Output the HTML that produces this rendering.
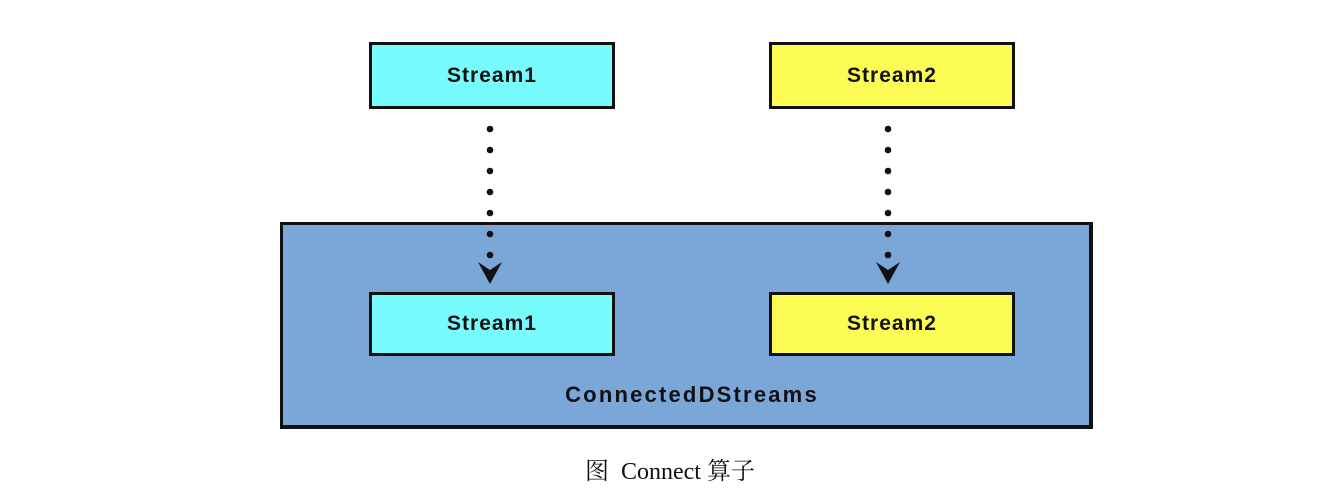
<!DOCTYPE html>
<html><head><meta charset="utf-8"><style>
body{margin:0;width:1328px;height:500px;background:#fff;position:relative;overflow:hidden;font-family:"Liberation Sans",sans-serif}
.b{position:absolute;box-sizing:border-box;border:3px solid #111;display:flex;align-items:center;justify-content:center;font-weight:bold;font-size:21px;color:#111;letter-spacing:1px}
.c{background:#77fbfd}.y{background:#fdfc55}
</style></head><body>
<div class="b" style="left:280px;top:222px;width:813px;height:207px;background:#7aa6d8;border-width:3px 4px 4px 3px;align-items:flex-end;padding-bottom:17px;font-size:22px;letter-spacing:2.2px;padding-left:12px">ConnectedDStreams</div>
<div class="b c" style="left:369px;top:42px;width:246px;height:67px">Stream1</div>
<div class="b y" style="left:769px;top:42px;width:246px;height:67px">Stream2</div>
<div class="b c" style="left:369px;top:292px;width:246px;height:64px">Stream1</div>
<div class="b y" style="left:769px;top:292px;width:246px;height:64px">Stream2</div>
<svg width="1328" height="500" style="position:absolute;left:0;top:0">
<g fill="#111">
<circle cx="490" cy="129" r="3.3"/><circle cx="490" cy="150" r="3.3"/><circle cx="490" cy="171" r="3.3"/><circle cx="490" cy="192" r="3.3"/><circle cx="490" cy="213" r="3.3"/><circle cx="490" cy="234" r="3.3"/><circle cx="490" cy="255" r="3.3"/>
<path d="M478 262 L490 270 L502 262 L490 284 Z"/>
<circle cx="888" cy="129" r="3.3"/><circle cx="888" cy="150" r="3.3"/><circle cx="888" cy="171" r="3.3"/><circle cx="888" cy="192" r="3.3"/><circle cx="888" cy="213" r="3.3"/><circle cx="888" cy="234" r="3.3"/><circle cx="888" cy="255" r="3.3"/>
<path d="M876 262 L888 270 L900 262 L888 284 Z"/>
</g></svg>
<div style="position:absolute;left:585px;top:451px;font-family:'Liberation Serif','Noto Serif CJK SC',serif;font-size:24px;color:#111;white-space:nowrap">图&nbsp; Connect 算子</div>
</body></html>
